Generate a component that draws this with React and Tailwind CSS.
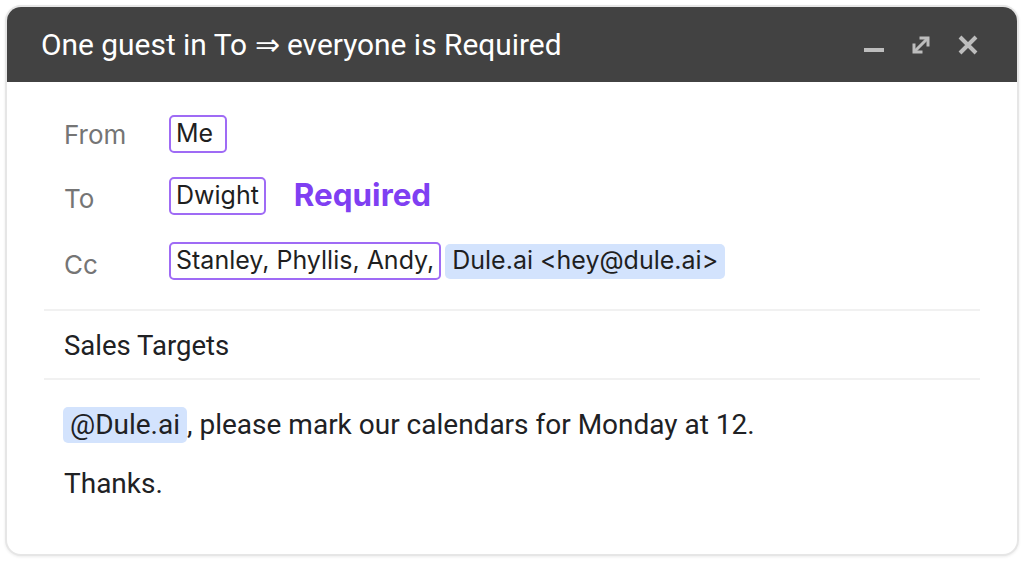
import React from "react";

export default function App() {
  return (
    <div className="w-[1024px] h-[561px] bg-white p-[5px]" style={{ fontFamily: "Roboto, sans-serif" }}>
      <div className="w-[1014px] h-[551px] rounded-[16px] border-2 border-[#e6e6e6] bg-white overflow-hidden flex flex-col shadow-[0_1px_3px_rgba(0,0,0,0.08)]">
        <div className="h-[75px] bg-[#424242] flex items-center pl-[34px] pr-[38px] shrink-0">
          <div className="text-white text-[29.9px] leading-none flex-1 pt-[1px]">One guest in To ⇒ everyone is Required</div>
          <div className="flex items-center gap-[24px]">
            <svg width="22" height="22" viewBox="0 0 22 22"><rect x="1" y="14" width="20" height="4" fill="#bdbdbd" /></svg>
            <svg width="24" height="24" viewBox="0 0 24 24" fill="none" stroke="#bdbdbd" strokeWidth="3">
              <path d="M5 19 L19 5" />
              <path d="M12 5 H19 V12" strokeLinecap="square" />
              <path d="M12 19 H5 V12" strokeLinecap="square" />
            </svg>
            <svg width="22" height="22" viewBox="0 0 22 22" fill="none" stroke="#bdbdbd" strokeWidth="4">
              <path d="M3 3 L19 19 M19 3 L3 19" />
            </svg>
          </div>
        </div>
        <div className="flex flex-col px-[37px] pt-[33px]">
          <div className="flex flex-col gap-[24px] pl-[20px]" style={{ fontFamily: "Inter, sans-serif" }}>
            <div className="flex items-center h-[38px]">
              <div className="w-[105px] text-[26px] text-[#757575]">From</div>
              <div className="h-[38px] px-[5px] border-2 border-[#9f6bf5] rounded-[5px] text-[25px] text-[#1f1f1f] flex items-center">Me&nbsp;</div>
            </div>
            <div className="flex items-center h-[38px]">
              <div className="w-[105px] text-[26px] text-[#757575] pt-[5px]">To</div>
              <div className="h-[38px] px-[5px] border-2 border-[#9f6bf5] rounded-[5px] text-[25px] text-[#1f1f1f] flex items-center">Dwight</div>
              <div className="ml-[28px] text-[31.4px] font-bold text-[#7f3ff2]">Required</div>
            </div>
            <div className="flex items-center h-[38px] mt-[3px]">
              <div className="w-[105px] text-[26px] text-[#757575] pt-[7px]">Cc</div>
              <div className="h-[38px] px-[5px] border-2 border-[#9f6bf5] rounded-[5px] text-[25px] text-[#1f1f1f] flex items-center">Stanley, Phyllis, Andy,</div>
              <div className="ml-[4px] h-[35px] px-[7px] bg-[#d3e3fd] rounded-[5px] text-[25px] text-[#1f1f1f] flex items-center">Dule.ai &lt;hey@dule.ai&gt;</div>
            </div>
          </div>
          <div className="mt-[29px] border-t-2 border-[#f1f1f1]" />
          <div className="h-[67px] flex items-center pl-[20px] text-[27.5px] text-[#202124] pt-[3px]">Sales Targets</div>
          <div className="border-t-2 border-[#f1f1f1]" />
          <div className="pl-[20px] pt-[26px] text-[28px] text-[#202124]">
            <div className="flex items-center h-[36px] mt-[1px]">
              <span className="bg-[#d3e3fd] rounded-[5px] h-[36px] px-[7px] flex items-center -ml-[1px]">@Dule.ai</span>
              <span>, please mark our calendars for Monday at 12.</span>
            </div>
            <div className="mt-[20px]">Thanks.</div>
          </div>
        </div>
      </div>
    </div>
  );
}
